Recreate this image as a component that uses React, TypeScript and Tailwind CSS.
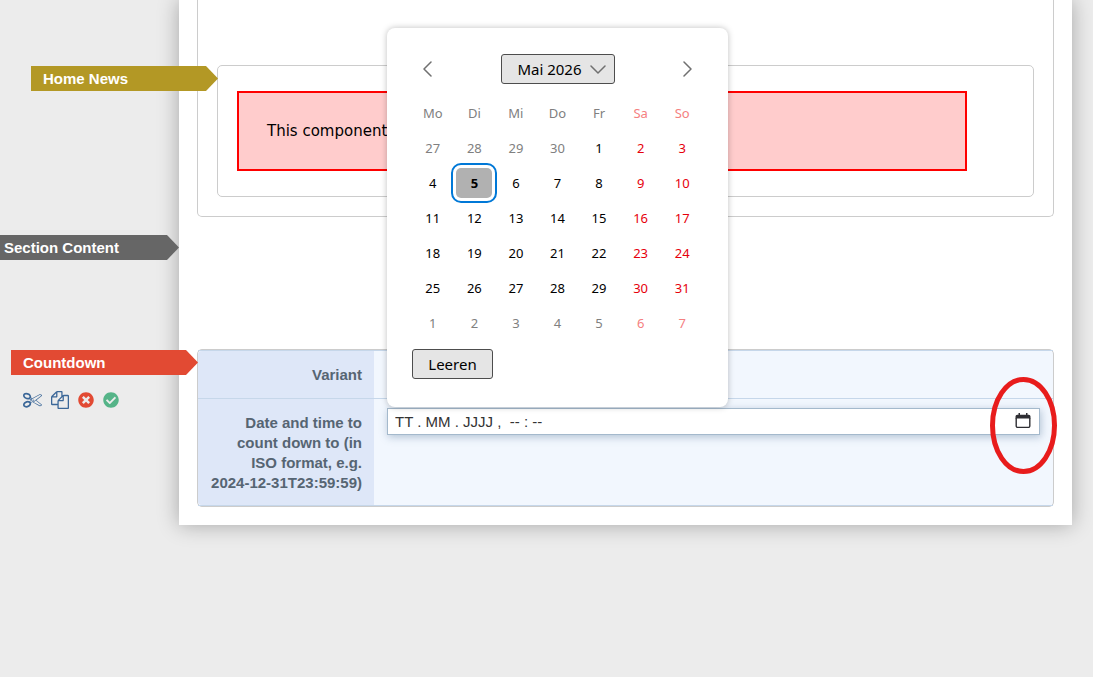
import type { ReactNode } from "react";
import { FaCheckCircle, FaTimesCircle } from "react-icons/fa";

const weekdays = ["Mo", "Di", "Mi", "Do", "Fr", "Sa", "So"];

const weeks = [
  [27, 28, 29, 30, 1, 2, 3],
  [4, 5, 6, 7, 8, 9, 10],
  [11, 12, 13, 14, 15, 16, 17],
  [18, 19, 20, 21, 22, 23, 24],
  [25, 26, 27, 28, 29, 30, 31],
  [1, 2, 3, 4, 5, 6, 7],
];

interface TagProps {
  color: string;
  children: ReactNode;
}

const Tag = ({ color, children }: TagProps) => {
  return (
    <div
      className={`h-[25px] w-[187px] pl-3 text-[15px] leading-[25px] font-bold text-white [clip-path:polygon(0_0,175px_0,100%_50%,175px_100%,0_100%)] ${color}`}
    >
      {children}
    </div>
  );
};

const ScissorsIcon = () => (
  <svg viewBox="0 0 1792 1792" className="h-[19px] w-[19px]" fill="currentColor">
    <path d="M960 896q26 0 45 19t19 45-19 45-45 19-45-19-19-45 19-45 45-19zm300 64l507 398q28 20 25 56-5 35-35 51l-128 64q-13 7-29 7-17 0-31-8l-690-387-110 66q-8 4-12 5 14 49 10 97-7 77-56 147.5t-132 123.5q-132 84-277 84-136 0-222-78-90-84-79-207 7-76 56-147t131-124q132-84 278-84 83 0 151 31 9-13 22-22l122-73-122-73q-13-9-22-22-68 31-151 31-146 0-278-84-82-53-131-124t-56-147q-5-59 15.5-113t63.5-93q85-79 222-79 145 0 277 84 83 52 132 123t56 148q4 48-10 97 4 1 12 5l110 66 690-387q14-8 31-8 16 0 29 7l128 64q30 16 35 51 3 36-25 56zm-681-260q46-42 21-108t-106-117q-92-59-192-59-74 0-113 36-46 42-21 108t106 117q92 59 192 59 74 0 113-36zm-85 745q81-51 106-117t-21-108q-39-36-113-36-100 0-192 59-81 51-106 117t21 108q39 36 113 36 100 0 192-59zm178-613l96 58v-11q0-36 33-56l14-8-79-44-26 26q-3 3-10 11t-12 12q-2 2-4 3.5t-3 2.5zm224 224l96 32 736-576-128-64-768 431v113l-160 96 9 8q2 2 7 6 4 4 11 12t11 12l26 26zm704 416l128-64-520-408-177 138q-2 3-13 7z" />
  </svg>
);

const CopyIcon = () => (
  <svg viewBox="0 0 1792 1792" className="h-[18px] w-[18px]" fill="currentColor">
    <path d="M1696 384q40 0 68 28t28 68v1216q0 40-28 68t-68 28h-960q-40 0-68-28t-28-68v-288h-544q-40 0-68-28t-28-68v-672q0-40 20-88t48-76l408-408q28-28 76-48t88-20h416q40 0 68 28t28 68v328q68-40 128-40h416zm-544 213l-299 299h299v-299zm-640-384l-299 299h299v-299zm196 647l316-316v-416h-384v416q0 40-28 68t-68 28h-416v640h512v-256q0-40 20-88t48-76zm956 804v-1152h-384v416q0 40-28 68t-68 28h-416v640h896z" />
  </svg>
);

interface ChevronProps {
  d: string;
  viewBox: string;
  className: string;
}

const Chevron = ({ d, viewBox, className }: ChevronProps) => (
  <svg viewBox={viewBox} className={className} fill="none" stroke="#707070" strokeWidth="1.5">
    <path d={d} strokeLinecap="round" strokeLinejoin="round" />
  </svg>
);

const CalendarIcon = () => (
  <svg viewBox="0 0 16 16" className="h-4 w-4" fill="none">
    <path
      d="M1.2 5v7.9a1.5 1.5 0 0 0 1.5 1.5h10.6a1.5 1.5 0 0 0 1.5-1.5V5"
      stroke="#2e2e33"
      strokeWidth="1.4"
    />
    <path
      d="M3.5 0v1.8h-1.2A1.8 1.8 0 0 0 .5 3.6V5.4h15V3.6a1.8 1.8 0 0 0-1.8-1.8h-1.2V0H11v1.8H5V0z"
      fill="#2e2e33"
    />
  </svg>
);

const dayColor = (week: number, index: number, day: number) => {
  const outside = (week === 0 && day > 7) || week === 5;
  if (index > 4) return outside ? "text-[#f58080]" : "text-[#e6000c]";
  return outside ? "text-[#808080]" : "text-black";
};

const DatePicker = () => {
  return (
    <div className="absolute bottom-full left-0 z-10 mb-px w-[341px] rounded-lg bg-white px-[25px] pt-[26px] pb-7 font-['Noto_Sans','Open_Sans',sans-serif] text-black shadow-[0_0_6px_rgba(0,0,0,0.25)]">
      <div className="flex items-center justify-between px-[10px]">
        <button type="button" aria-label="Vorheriger Monat">
          <Chevron viewBox="0 0 10 16" d="M9 1 2 8l7 7" className="h-4 w-[10px]" />
        </button>
        <button
          type="button"
          aria-haspopup="listbox"
          className="flex h-[30px] w-[114px] items-center justify-end gap-2 rounded-[3px] border border-[#4d4d4d] bg-[#e5e5e5] pr-2 text-[15px]"
        >
          Mai 2026
          <Chevron viewBox="0 0 16 9" d="M1 1l7 7 7-7" className="h-[9px] w-4" />
        </button>
        <button type="button" aria-label="Nächster Monat">
          <Chevron viewBox="0 0 10 16" d="m1 1 7 7-7 7" className="h-4 w-[10px]" />
        </button>
      </div>
      <table className="mt-[11px] w-full table-fixed text-center text-[13px]">
        <thead>
          <tr className="h-[35px]">
            {weekdays.map((name, i) => (
              <th key={name} className={`p-0 font-normal ${i > 4 ? "text-[#f58080]" : "text-[#808080]"}`}>
                {name}
              </th>
            ))}
          </tr>
        </thead>
        <tbody>
          {weeks.map((week, w) => (
            <tr key={w} className="h-[35px]">
              {week.map((day, i) => (
                <td key={i} className={`p-0 ${dayColor(w, i, day)}`}>
                  {w === 1 && day === 5 ? (
                    <button
                      type="button"
                      className="h-[30px] w-9 rounded-[5px] bg-[#b1b1b1] align-middle font-bold outline-2 outline-offset-3 outline-[#0078d7]"
                    >
                      {day}
                    </button>
                  ) : (
                    <button type="button" className="h-[30px] w-9 align-middle">
                      {day}
                    </button>
                  )}
                </td>
              ))}
            </tr>
          ))}
        </tbody>
      </table>
      <button
        type="button"
        className="mt-[9px] block h-[30px] w-[81px] rounded-[3px] border border-[#4d4d4d] bg-[#e5e5e5] text-[15px] leading-7"
      >
        Leeren
      </button>
    </div>
  );
};

const DateField = () => {
  return (
    <div className="relative">
      <DatePicker />
      <div className="flex h-[27px] items-center border border-[#a4b9cc] bg-white shadow-[1px_2px_8px_rgba(100,130,160,0.45)]">
        <input
          id="countdown-date"
          type="text"
          defaultValue={"TT . MM . JJJJ ,\u00a0 -- : --"}
          className="min-w-0 flex-1 px-[7px] text-[15px] text-[#333] outline-none"
        />
        <div className="relative mr-2 mb-0.5 flex">
          <button type="button" aria-label="Kalender öffnen">
            <CalendarIcon />
          </button>
          {/* hand-drawn marker around the calendar button */}
          <svg
            viewBox="0 0 68 98"
            className="pointer-events-none absolute -top-9 -left-[26px] h-[98px] w-[68px] max-w-none"
            fill="none"
          >
            <ellipse cx="34.5" cy="48.5" rx="31" ry="46" stroke="#e81c1c" strokeWidth="5" />
          </svg>
        </div>
      </div>
    </div>
  );
};

const App = () => {
  return (
    <div className="min-h-screen overflow-hidden bg-[#ececec] font-['Liberation_Sans',Arial,sans-serif]">
      <main className="relative mr-[21px] ml-[179px] bg-white px-[18px] pb-[18px] shadow-[0_0_20px_rgba(0,0,0,0.3)]">
        <div className="rounded-b-[5px] border border-t-0 border-[#ccc] px-[19px] pt-[65px] pb-[19px]">
          <div className="relative rounded-[5px] border border-[#ccc] py-[25px] pr-[66px] pl-[19px]">
            <div className="absolute top-0 right-full">
              <Tag color="bg-[#b39825]">Home News</Tag>
            </div>
            <div className="flex h-20 items-center border-2 border-[#f00] bg-[#fcc] px-7">
              <p className="font-['DejaVu_Sans',sans-serif] text-[15px] leading-6 whitespace-nowrap text-black">
                This component
              </p>
            </div>
          </div>
        </div>

        <section className="relative -mx-[18px] mt-[18px] h-[114px]">
          <div className="absolute top-0 right-full">
            <Tag color="bg-[#666]">Section Content</Tag>
          </div>
        </section>

        <section className="relative rounded-[5px] border border-[#ccc] bg-[#f2f7fe]">
          <div className="absolute top-0 right-full w-[187px]">
            <Tag color="bg-[#e24a33]">Countdown</Tag>
            <div className="mt-[15px] flex items-center pl-3 text-[#3b6798]">
              <button type="button" aria-label="Cut">
                <ScissorsIcon />
              </button>
              <button type="button" aria-label="Copy" className="ml-[9px]">
                <CopyIcon />
              </button>
              <button type="button" aria-label="Delete" className="ml-[9px] text-[#e24a33]">
                <FaTimesCircle size={16} />
              </button>
              <button type="button" aria-label="Publish" className="ml-[9px] text-[#55b488]">
                <FaCheckCircle size={16} />
              </button>
            </div>
          </div>
          <div className="flex border-y border-[#c6d7ea] text-[15px] leading-5 font-bold text-[#566573]">
            <div className="w-44 shrink-0 rounded-l-[4px] bg-[#dee7f8] text-right">
              <div className="h-12 border-b border-[#c6d7ea] pt-[14px] pr-3">Variant</div>
              <label htmlFor="countdown-date" className="block px-3 pt-[14px] pb-3">
                Date and time to count down to (in ISO format, e.g. 2024-12-31T23:59:59)
              </label>
            </div>
            <div className="min-w-0 flex-1">
              <div className="h-12 border-b border-[#c6d7ea]" />
              <div className="px-[13px] pt-[9px] font-normal">
                <DateField />
              </div>
            </div>
          </div>
        </section>
      </main>
    </div>
  );
};

export default App;
